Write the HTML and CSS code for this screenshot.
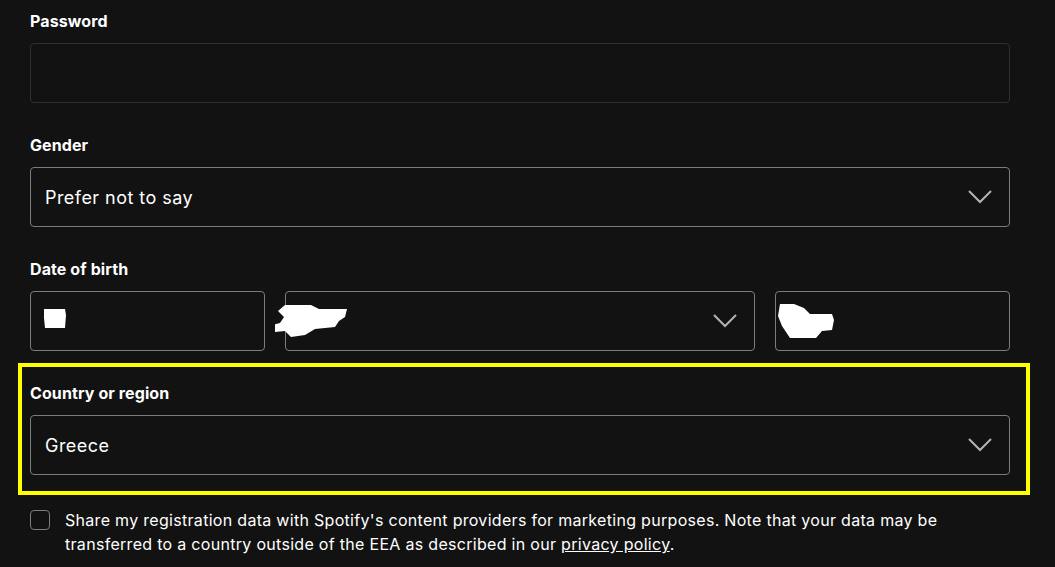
FILE: index.html
```html
<!DOCTYPE html>
<html lang="en">
<head>
    <meta charset="UTF-8">
    <meta name="viewport" content="width=device-width, initial-scale=1.0">
    <title>Sign up</title>
    <link rel="stylesheet" href="styles.css">
</head>
<body>
    <form class="signup">
        <div class="field">
            <label class="label" for="password">Password</label>
            <div class="box box-muted"></div>
        </div>

        <div class="field">
            <label class="label">Gender</label>
            <div class="box select">
                <span>Prefer not to say</span>
                <svg class="chevron" viewBox="0 0 24 14"><path d="M1 1l11 11L23 1"/></svg>
            </div>
        </div>

        <div class="field">
            <label class="label">Date of birth</label>
            <div class="dob">
                <div class="box">
                    <svg class="scribble s1" viewBox="0 0 24 23"><path d="M1 3h21l1 6-1 13H2L1 12z"/></svg>
                </div>
                <div class="box select">
                    <svg class="scribble s2" viewBox="0 0 73 34"><path d="M10 0h26l8 4h28l-2 8-6 4-4 6-20 2-10 6-14 2-6-6-20 2-1-6 16-4 4-6-6-6z"/></svg>
                    <svg class="chevron" viewBox="0 0 24 14"><path d="M1 1l11 11L23 1"/></svg>
                </div>
                <div class="box">
                    <svg class="scribble s3" viewBox="0 0 58 37"><path d="M2 2l14 0 10 4 6 6h22l2 6-2 10-10 1-6 7H12L8 30 4 24 0 14z"/></svg>
                </div>
            </div>
        </div>

        <div class="field highlight">
            <label class="label">Country or region</label>
            <div class="box select">
                <span>Greece</span>
                <svg class="chevron" viewBox="0 0 24 14"><path d="M1 1l11 11L23 1"/></svg>
            </div>
        </div>

        <div class="consent">
            <span class="checkbox"></span>
            <p>Share my registration data with Spotify's content providers for marketing purposes. Note that your data may be transferred to a country outside of the EEA as described in our <a href="#">privacy policy</a>.</p>
        </div>
    </form>
</body>
</html>
```

FILE: styles.css
```css
body {
    margin: 0;
    background-color: #121212;
    color: #fff;
    font-family: Inter, 'Noto Sans', Arial, sans-serif;
}
.signup {
    width: 980px;
    padding: 10px 0 0 30px;
    display: flex;
    flex-direction: column;
    gap: 31px;
}
.field {
    display: flex;
    flex-direction: column;
    gap: 10px;
}
.label {
    font-size: 16px;
    font-weight: 700;
    line-height: 23px;
    letter-spacing: 0.1px;
}
.box {
    position: relative;
    height: 60px;
    box-sizing: border-box;
    border: 1px solid #7c7c7c;
    border-radius: 4px;
    padding: 0 17px 0 14px;
    display: flex;
    align-items: center;
    font-size: 18px;
    letter-spacing: 0.45px;
}
.box-muted {
    border-color: #2f2f2f;
}
.select {
    justify-content: space-between;
}
.chevron {
    width: 24px;
    height: 14px;
    margin-left: auto;
    fill: none;
    stroke: #b3b3b3;
    stroke-width: 2;
}
.dob {
    display: grid;
    grid-template-columns: 1fr 2fr 1fr;
    gap: 20px;
}
.scribble {
    position: absolute;
    fill: #fff;
}
.s1 {
    left: 12px;
    top: 14px;
    width: 24px;
    height: 23px;
}
.s2 {
    left: -11px;
    top: 13px;
    width: 73px;
    height: 34px;
}
.s3 {
    left: 2px;
    top: 10px;
    width: 58px;
    height: 37px;
}
.highlight {
    position: relative;
}
.highlight::after {
    content: '';
    position: absolute;
    left: -12px;
    right: -20px;
    top: -19px;
    bottom: -20px;
    border: 4px solid #ffff00;
    pointer-events: none;
}
.consent {
    display: flex;
    gap: 15px;
    margin-top: 2px;
}
.checkbox {
    flex: none;
    width: 20px;
    height: 20px;
    box-sizing: border-box;
    border: 1px solid #7c7c7c;
    border-radius: 4px;
    margin-top: 2px;
}
.consent p {
    margin: 0;
    font-size: 16px;
    line-height: 24px;
    letter-spacing: 0.3px;
    width: 920px;
}
.consent a {
    color: #fff;
}
```
